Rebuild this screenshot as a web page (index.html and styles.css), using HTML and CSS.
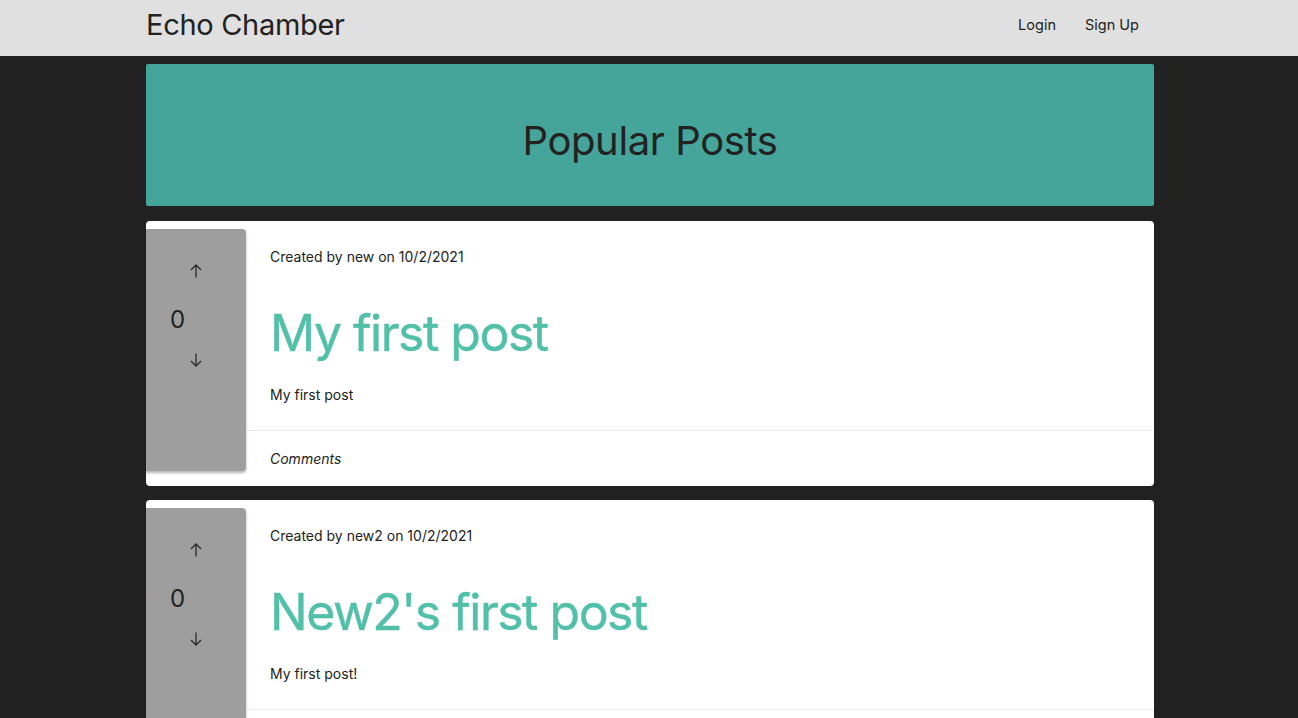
FILE: index.html
```html
<!DOCTYPE html>
<html lang="en">
<head>
<meta charset="utf-8">
<title>Echo Chamber</title>
<link rel="stylesheet" href="styles.css">
</head>
<body>
<header class="navbar">
  <div class="navbar-inner">
    <a class="brand" href="#">Echo Chamber</a>
    <nav class="nav-links">
      <a href="#" class="nav-link">Login</a>
      <a href="#" class="nav-link">Sign Up</a>
    </nav>
  </div>
</header>
<main class="container">
  <section class="hero">
    <h1 class="hero-title">Popular Posts</h1>
  </section>
  <div class="post-list">
    <article class="post-card">
      <div class="vote">
        <button class="vote-btn" aria-label="upvote">
          <svg width="16" height="16" viewBox="0 0 16 16"><path d="M8 14.5V2M3 7l5-5 5 5" fill="none" stroke="#2a2a2a" stroke-width="1.3"/></svg>
        </button>
        <div class="vote-count">0</div>
        <button class="vote-btn" aria-label="downvote">
          <svg width="16" height="16" viewBox="0 0 16 16"><path d="M8 1.5V14M3 9l5 5 5-5" fill="none" stroke="#2a2a2a" stroke-width="1.3"/></svg>
        </button>
      </div>
      <div class="post-body">
        <div class="post-main">
          <p class="post-meta">Created by new on 10/2/2021</p>
          <h2 class="post-title">My first post</h2>
          <p class="post-text">My first post</p>
        </div>
        <div class="post-footer"><span class="comments">Comments</span></div>
      </div>
    </article>
    <article class="post-card">
      <div class="vote">
        <button class="vote-btn" aria-label="upvote">
          <svg width="16" height="16" viewBox="0 0 16 16"><path d="M8 14.5V2M3 7l5-5 5 5" fill="none" stroke="#2a2a2a" stroke-width="1.3"/></svg>
        </button>
        <div class="vote-count">0</div>
        <button class="vote-btn" aria-label="downvote">
          <svg width="16" height="16" viewBox="0 0 16 16"><path d="M8 1.5V14M3 9l5 5 5-5" fill="none" stroke="#2a2a2a" stroke-width="1.3"/></svg>
        </button>
      </div>
      <div class="post-body">
        <div class="post-main">
          <p class="post-meta">Created by new2 on 10/2/2021</p>
          <h2 class="post-title">New2's first post</h2>
          <p class="post-text">My first post!</p>
        </div>
        <div class="post-footer"><span class="comments">Comments</span></div>
      </div>
    </article>
  </div>
</main>
</body>
</html>
```
FILE: styles.css
```css
* { box-sizing: border-box; }
html, body { margin: 0; padding: 0; }
body {
  background: #212121;
  font-family: Inter, "Noto Sans", "Liberation Sans", sans-serif;
  color: #222;
}
a { text-decoration: none; color: inherit; }

.navbar {
  background: #e0e0e0;
  height: 56px;
}
.navbar-inner {
  width: 1010px;
  padding-left: 2px;
  margin: 0 auto;
  height: 100%;
  display: flex;
  align-items: center;
  justify-content: space-between;
}
.brand {
  font-size: 29px;
  color: #222;
  letter-spacing: -0.3px;
  padding-bottom: 7px;
}
.nav-links {
  display: flex;
  gap: 29px;
  padding-right: 15px;
  padding-bottom: 8px;
}
.nav-link {
  font-size: 14.5px;
  color: #222;
}

.container {
  width: 1010px;
  padding-left: 2px;
  margin: 0 auto;
  padding-top: 8px;
}
.hero {
  background: #45a59a;
  height: 142px;
  border-radius: 2px;
  display: flex;
  align-items: center;
  justify-content: center;
  padding-top: 10px;
}
.hero-title {
  margin: 0;
  font-weight: 400;
  font-size: 40px;
  letter-spacing: -0.4px;
  color: #222;
}

.post-list {
  margin-top: 15px;
  display: flex;
  flex-direction: column;
  gap: 14px;
}
.post-card {
  background: #fff;
  border-radius: 4px;
  display: flex;
  height: 265px;
}
.vote {
  width: 100px;
  flex: none;
  margin: 8px 0 15px;
  background: #9e9e9e;
  border-radius: 0 4px 4px 0;
  box-shadow: 0 2px 3px rgba(0,0,0,0.3);
  display: flex;
  flex-direction: column;
  padding-top: 34px;
}
.vote-btn {
  background: none;
  border: none;
  padding: 0;
  width: 100px;
  height: 16px;
  display: flex;
  justify-content: center;
  cursor: pointer;
}
.vote-btn svg { display: block; }
.vote-count {
  font-size: 24px;
  line-height: 28px;
  padding-left: 24px;
  margin: 27px 0 18px;
  color: #222;
}
.post-body {
  flex: 1;
  display: flex;
  flex-direction: column;
}
.post-main {
  padding: 26px 24px 25px;
}
.post-meta {
  margin: 0;
  font-size: 14px;
  line-height: 20px;
}
.post-title {
  margin: 32px 0 18px;
  font-weight: 400;
  font-size: 50px;
  line-height: 68px;
  color: #52c0a8;
  letter-spacing: -1.5px;
  -webkit-text-stroke: 0.4px #52c0a8;
}
.post-text {
  margin: 0;
  font-size: 14px;
  line-height: 20px;
}
.post-footer {
  border-top: 1px solid #e8e8e8;
  height: 56px;
  padding: 0 24px;
  display: flex;
  align-items: center;
}
.comments {
  font-style: italic;
  font-size: 14px;
}
```
